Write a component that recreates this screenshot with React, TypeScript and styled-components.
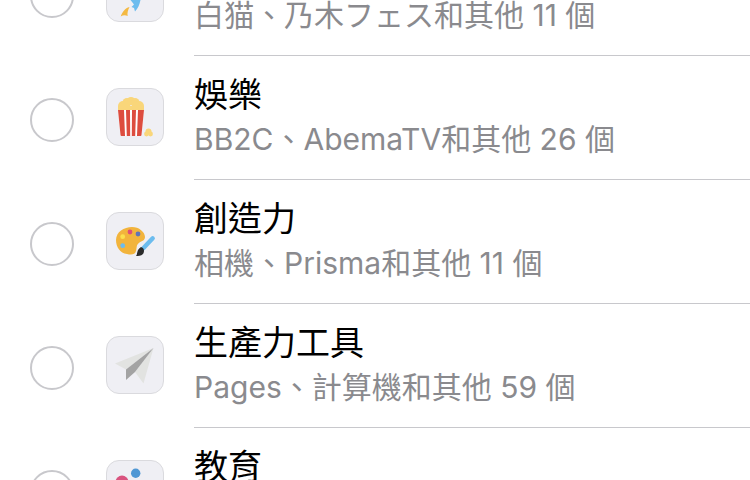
import React from 'react';
import styled, { createGlobalStyle } from 'styled-components';

const GlobalStyle = createGlobalStyle`
  html, body {
    margin: 0;
    padding: 0;
    background: #fff;
  }
  body {
    font-family: Inter, "Noto Sans CJK TC", sans-serif;
  }
`;

const Viewport = styled.div`
  width: 750px;
  height: 480px;
  overflow: hidden;
`;

// the list is scrolled, the first row starts above the fold
const List = styled.ul`
  list-style: none;
  margin: -68px 0 0;
  padding: 0;
`;

const Row = styled.li`
  display: flex;
  height: 124px;
  padding-left: 30px;
`;

const Radio = styled.span`
  flex: none;
  box-sizing: border-box;
  width: 44px;
  height: 44px;
  margin-top: 42px;
  border: 2px solid #c8c8cc;
  border-radius: 50%;
`;

const Tile = styled.span`
  flex: none;
  box-sizing: border-box;
  width: 58px;
  height: 58px;
  margin: 32px 30px 0 32px;
  border: 1px solid #dadade;
  border-radius: 13px;
  background: #efeff4;
  overflow: hidden;

  svg {
    display: block;
    margin: -1px;
  }
`;

const Body = styled.div`
  flex: 1;
  box-sizing: border-box;
  padding-top: 17px;
  border-bottom: 1px solid #c8c8cc;
`;

const Title = styled.div`
  height: 44px;
  font-size: 34px;
  line-height: 44px;
  color: #000;
`;

const Subtitle = styled.div`
  height: 40px;
  padding-top: 2px;
  font-size: 30px;
  line-height: 40px;
  color: #8a8a8e;
  white-space: nowrap;
`;

const Glyph = ({ children }: { children: React.ReactNode }) => (
  <svg width="58" height="58" viewBox="0 0 58 58">
    {children}
  </svg>
);

const RocketIcon = () => (
  <Glyph>
    <path d="M23.5 43 C19 44 16.5 48 14.7 52.5 C17 51 19.5 51 21.7 52 C21 49 22 46 23.5 43 Z" fill="#f4b942" />
    <path d="M35 30 L24.5 36 L28 40.5 L25.5 43 L28 44 L29 47.5 C32.5 44 35 38 35 30 Z" fill="#6cbcee" />
  </Glyph>
);

const PopcornIcon = () => (
  <Glyph>
    <g fill="#f9d67a">
      <circle cx="17" cy="18" r="5" />
      <circle cx="21" cy="14.5" r="4.5" />
      <circle cx="25" cy="13" r="4" />
      <circle cx="29" cy="14.5" r="4.5" />
      <circle cx="33" cy="18" r="5" />
      <rect x="12" y="18" width="26" height="4" />
    </g>
    <path d="M12 22 H38 L35.5 47 Q35.4 48 34.5 48 H15.5 Q14.6 48 14.5 47 Z" fill="#fff" />
    <path
      d="M12 22 H18 L19 48 H15.5 Q14.6 48 14.5 47 Z M20 22 H24 L24.2 48 H20.8 Z M26 22 H30 L29.2 48 H25.8 Z M32 22 H38 L35.5 47 Q35.4 48 34.5 48 H31 Z"
      fill="#dd4d3f"
    />
    <g fill="#f9d67a">
      <circle cx="42.5" cy="43.5" r="3" />
      <circle cx="40.5" cy="46" r="2.4" />
      <circle cx="44.5" cy="46" r="2.4" />
    </g>
  </Glyph>
);

const PaletteIcon = () => (
  <Glyph>
    <path
      d="M10 28 C10 20 18 15 26 15 C33 15 39 20 39 25 C39 29 35 29 33 31 C30 33 31 36 30 39 C29 43 25 43 21 42 C14 41 10 35 10 28 Z"
      fill="#f2b43c"
    />
    <circle cx="16.7" cy="24.7" r="2.4" fill="#fbe14d" />
    <circle cx="24" cy="20" r="2.4" fill="#df4f74" />
    <circle cx="32" cy="22" r="2.4" fill="#5f74b8" />
    <circle cx="16.7" cy="33.7" r="2.4" fill="#6cbcee" />
    <path d="M46.7 26.3 L37.3 36.3" stroke="#6cbcee" strokeWidth="4.4" strokeLinecap="round" />
    <path d="M35 35 C38 36 39 39 37 42 C35 44 32 44 30 44 C32 42 30 38 35 35 Z" fill="#2b2b2b" />
  </Glyph>
);

const PlaneIcon = () => (
  <Glyph>
    <path d="M47.5 12 L9 27.5 L20 33.5 Z" fill="#e2e3e1" />
    <path d="M47.5 12 L29 36 L37.5 47.5 Z" fill="#e2e3e1" />
    <path d="M47.5 12 L20 33.5 V44 L29 36 Z" fill="#a3a3a3" />
  </Glyph>
);

const LearningIcon = () => (
  <Glyph>
    <circle cx="29.7" cy="13.3" r="4.7" fill="#4f97d4" />
    <circle cx="16" cy="22" r="6.5" fill="#d9537f" />
  </Glyph>
);

const rows = [
  { title: '', subtitle: '白猫、乃木フェス和其他 11 個', icon: <RocketIcon /> },
  { title: '娛樂', subtitle: 'BB2C、AbemaTV和其他 26 個', icon: <PopcornIcon /> },
  { title: '創造力', subtitle: '相機、Prisma和其他 11 個', icon: <PaletteIcon /> },
  { title: '生產力工具', subtitle: 'Pages、計算機和其他 59 個', icon: <PlaneIcon /> },
  { title: '教育', subtitle: '', icon: <LearningIcon /> },
];

export default function App() {
  return (
    <Viewport>
      <GlobalStyle />
      <List>
        {rows.map((row, i) => (
          <Row key={i}>
            <Radio />
            <Tile>{row.icon}</Tile>
            <Body>
              <Title>{row.title}</Title>
              <Subtitle>{row.subtitle}</Subtitle>
            </Body>
          </Row>
        ))}
      </List>
    </Viewport>
  );
}
